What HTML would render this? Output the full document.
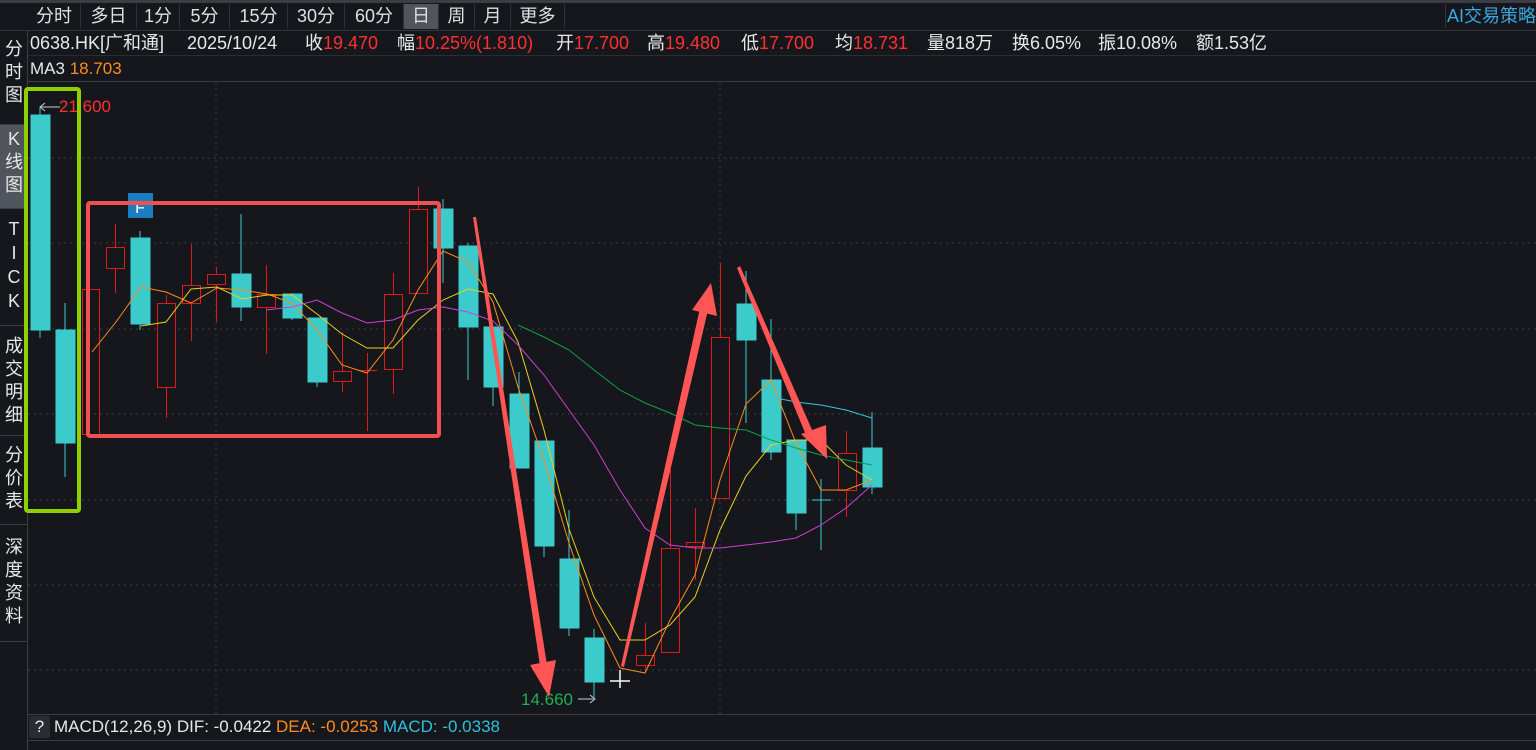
<!DOCTYPE html><html><head><meta charset="utf-8"><style>
body{margin:0;width:1536px;height:750px;background:#15171c;overflow:hidden;position:relative;font-family:"Liberation Sans","Noto Sans CJK SC",sans-serif;color:#e8e8e8}
.a{position:absolute;white-space:nowrap;font-size:18px;line-height:20px}
.r{color:#ff3030}.o{color:#ff8c1a}.c{color:#2fc0d8}
.tab{position:absolute;top:4px;height:25px;line-height:25px;font-size:18px;text-align:center;color:#e0e0e0;border-right:1px solid #2e3138}
.side{position:absolute;left:0;width:28px;text-align:center;font-size:18px;line-height:23px;color:#e8e8e8;border-bottom:1px solid #3a3d44}
</style></head><body>
<div style="position:absolute;left:0;top:0;width:1536px;height:3px;background:#3a3d44"></div>
<div style="position:absolute;left:0;top:30px;width:1536px;height:1px;background:#33363d"></div>
<div style="position:absolute;left:28px;top:81px;width:1508px;height:1px;background:#3a3d44"></div>
<div style="position:absolute;left:28px;top:55px;width:1508px;height:1px;background:#2a2d33"></div>
<div style="position:absolute;left:28px;top:714px;width:1508px;height:1px;background:#3a3d44"></div>
<div style="position:absolute;left:28px;top:740px;width:1508px;height:1px;background:#3a3d44"></div>
<div style="position:absolute;left:27px;top:31px;width:1px;height:719px;background:#3a3d44"></div>
<div class="tab" style="left:28px;width:52px">分时</div>
<div class="tab" style="left:81px;width:55px">多日</div>
<div class="tab" style="left:137px;width:42px">1分</div>
<div class="tab" style="left:180px;width:49px">5分</div>
<div class="tab" style="left:230px;width:57px">15分</div>
<div class="tab" style="left:288px;width:56px">30分</div>
<div class="tab" style="left:345px;width:58px">60分</div>
<div class="tab" style="left:404px;width:34px;background:#50545c">日</div>
<div class="tab" style="left:439px;width:35px">周</div>
<div class="tab" style="left:475px;width:35px">月</div>
<div class="tab" style="left:511px;width:53px">更多</div>
<div class="a" style="left:1447px;top:6px;color:#3aa8e0">AI交易策略</div>
<div style="position:absolute;left:1445px;top:4px;width:1px;height:24px;background:#33363d"></div>
<div class="side" style="top:36px;padding-top:2px;height:86px">分<br>时<br>图</div>
<div class="side" style="top:125px;height:80px;background:#50545c;padding-top:3px">K<br>线<br>图</div>
<div class="side" style="top:209px;height:108px;padding-top:8px;line-height:24px">T<br>I<br>C<br>K</div>
<div class="side" style="top:327px;height:100px;padding-top:8px">成<br>交<br>明<br>细</div>
<div class="side" style="top:436px;height:80px;padding-top:8px">分<br>价<br>表</div>
<div class="side" style="top:526px;height:105px;padding-top:10px">深<br>度<br>资<br>料</div>
<div class="a" style="left:30px;top:33px">0638.HK[广和通]</div>
<div class="a" style="left:187px;top:33px">2025/10/24</div>
<div class="a" style="left:305px;top:33px">收<span class="r">19.470</span></div>
<div class="a" style="left:397px;top:33px">幅<span class="r">10.25%(1.810)</span></div>
<div class="a" style="left:556px;top:33px">开<span class="r">17.700</span></div>
<div class="a" style="left:647px;top:33px">高<span class="r">19.480</span></div>
<div class="a" style="left:741px;top:33px">低<span class="r">17.700</span></div>
<div class="a" style="left:835px;top:33px">均<span class="r">18.731</span></div>
<div class="a" style="left:927px;top:33px">量818万</div>
<div class="a" style="left:1012px;top:33px">换6.05%</div>
<div class="a" style="left:1098px;top:33px">振10.08%</div>
<div class="a" style="left:1196px;top:33px">额1.53亿</div>
<div class="a" style="left:30px;top:59px;font-size:17px">MA3 <span class="o">18.703</span></div>
<div style="position:absolute;left:29px;top:716px;width:21px;height:22px;background:#2a2c32;border-radius:2px;text-align:center;line-height:22px;font-size:17px">?</div>
<div class="a" style="left:54px;top:717px;font-size:17px">MACD(12,26,9) DIF: -0.0422 <span class="o">DEA: -0.0253</span> <span class="c">MACD: -0.0338</span></div>
<div class="a" style="left:59px;top:97px;font-size:17px;color:#ff3030">21.600</div>
<div class="a" style="left:521px;top:690px;font-size:17px;color:#20b050">14.660</div>
<svg style="position:absolute;left:0;top:0" width="1536" height="750">
<g stroke="#3a3d44" stroke-dasharray="2,4" stroke-width="1">
<line x1="28" y1="158" x2="1536" y2="158"/><line x1="28" y1="243" x2="1536" y2="243"/><line x1="28" y1="329" x2="1536" y2="329"/><line x1="28" y1="414" x2="1536" y2="414"/><line x1="28" y1="500" x2="1536" y2="500"/><line x1="28" y1="585" x2="1536" y2="585"/><line x1="28" y1="670" x2="1536" y2="670"/>
<line x1="216" y1="82" x2="216" y2="714"/><line x1="720" y1="82" x2="720" y2="714"/>
</g>
<g stroke="#cccccc" fill="none" stroke-width="1">
<line x1="40" y1="107" x2="60" y2="107"/><polyline points="45,103 40,107 45,111"/>
<line x1="578" y1="699" x2="595" y2="699"/><polyline points="590,695 595,699 590,703"/>
</g>
<g stroke="#3ccbcb" fill="#3ccbcb">
<line x1="40" y1="107" x2="40" y2="338"/><rect x="31" y="115" width="19" height="215"/>
<line x1="65" y1="303" x2="65" y2="477"/><rect x="56" y="330" width="19" height="113"/>
<line x1="140" y1="231" x2="140" y2="330"/><rect x="131" y="238" width="19" height="86"/>
<line x1="241" y1="214" x2="241" y2="321"/><rect x="232" y="274" width="19" height="33"/>
<line x1="292" y1="293" x2="292" y2="320"/><rect x="283" y="294" width="19" height="24"/>
<line x1="317" y1="318" x2="317" y2="387"/><rect x="308" y="318" width="19" height="64"/>
<line x1="443" y1="199" x2="443" y2="283"/><rect x="434" y="209" width="19" height="39"/>
<line x1="468" y1="243" x2="468" y2="380"/><rect x="459" y="246" width="19" height="81"/>
<line x1="493" y1="327" x2="493" y2="406"/><rect x="484" y="327" width="19" height="60"/>
<line x1="519" y1="372" x2="519" y2="468"/><rect x="510" y="394" width="19" height="74"/>
<line x1="544" y1="441" x2="544" y2="557"/><rect x="535" y="441" width="19" height="105"/>
<line x1="569" y1="510" x2="569" y2="636"/><rect x="560" y="559" width="19" height="69"/>
<line x1="594" y1="629" x2="594" y2="700"/><rect x="585" y="638" width="19" height="44"/>
<line x1="746" y1="271" x2="746" y2="423"/><rect x="737" y="304" width="19" height="36"/>
<line x1="771" y1="319" x2="771" y2="460"/><rect x="762" y="380" width="19" height="72"/>
<line x1="796" y1="440" x2="796" y2="530"/><rect x="787" y="440" width="19" height="73"/>
<line x1="821" y1="479" x2="821" y2="550"/><line x1="812" y1="500" x2="831" y2="500"/>
<line x1="872" y1="412" x2="872" y2="494"/><rect x="863" y="448" width="19" height="39"/>
</g>
<g stroke="#e01818" fill="none">
<line x1="99.5" y1="289" x2="99.5" y2="433"/><rect x="82.5" y="289.5" width="17" height="145"/>
<line x1="115.5" y1="224" x2="115.5" y2="293"/><rect x="106.5" y="247.5" width="18" height="21" fill="#15171c"/>
<line x1="166.5" y1="295" x2="166.5" y2="418"/><rect x="157.5" y="303.5" width="18" height="84" fill="#15171c"/>
<line x1="191.5" y1="244" x2="191.5" y2="341"/><rect x="182.5" y="285.5" width="18" height="18" fill="#15171c"/>
<line x1="216.5" y1="267" x2="216.5" y2="322"/><rect x="207.5" y="274.5" width="18" height="10" fill="#15171c"/>
<line x1="266.5" y1="265" x2="266.5" y2="354"/><rect x="257.5" y="294.5" width="18" height="13" fill="#15171c"/>
<line x1="342.5" y1="332" x2="342.5" y2="392"/><rect x="333.5" y="371.5" width="18" height="10" fill="#15171c"/>
<line x1="367.5" y1="353" x2="367.5" y2="431"/><line x1="358" y1="370.5" x2="377" y2="370.5"/>
<line x1="393.5" y1="273" x2="393.5" y2="394"/><rect x="384.5" y="294.5" width="18" height="75" fill="#15171c"/>
<line x1="418.5" y1="187" x2="418.5" y2="209"/><rect x="409.5" y="209.5" width="18" height="84" fill="#15171c"/>
<line x1="645.5" y1="623" x2="645.5" y2="672"/><rect x="636.5" y="655.5" width="18" height="10" fill="#15171c"/>
<line x1="670.5" y1="470" x2="670.5" y2="548"/><rect x="661.5" y="548.5" width="18" height="104" fill="#15171c"/>
<line x1="695.5" y1="508" x2="695.5" y2="580"/><rect x="686.5" y="542.5" width="18" height="4" fill="#15171c"/>
<line x1="720.5" y1="263" x2="720.5" y2="337"/><rect x="711.5" y="337.5" width="18" height="161" fill="#15171c"/>
<line x1="846.5" y1="431" x2="846.5" y2="517"/><rect x="838.5" y="453.5" width="18" height="37" fill="#15171c"/>
</g>
<g fill="none" stroke-width="1">
<polyline stroke="#ff8c1a" points="92,352 116,322 141,287 166,292 191,303 217,288 242,290 267,294 292,303 317,330 342,365 367,373 393,340 418,290 443,251 468,262 493,302 518,387 544,460 569,543 594,615 620,668 645,673 670,620 695,575 720,480 746,404 771,380 796,443 821,490 846,490 872,480"/>
<polyline stroke="#e8d020" points="141,326 166,322 191,289 217,287 242,299 267,295 292,295 317,314 342,334 367,348 393,348 418,320 443,300 468,289 493,294 518,342 544,430 569,529 594,597 620,640 645,640 670,625 695,597 720,530 746,476 771,445 796,440 821,440 846,465 872,480"/>
<polyline stroke="#d040d0" points="266,310 292,307 317,300 342,313 367,323 393,320 418,310 443,307 468,312 493,321 518,345 544,375 569,410 594,445 620,490 645,528 670,545 695,548 720,548 746,545 771,542 796,538 821,525 846,508 872,485"/>
<polyline stroke="#10a040" points="518,325 544,337 569,350 594,370 620,390 645,403 670,413 695,425 720,428 746,430 771,440 796,448 821,455 846,460 872,465"/>
<polyline stroke="#30c8e0" points="771,397 796,402 821,405 846,410 872,418"/>
</g>
<g stroke="#ffffff" stroke-width="1.5"><line x1="620" y1="670" x2="620" y2="688"/><line x1="610" y1="681" x2="630" y2="681"/></g>
<rect x="128" y="193" width="25" height="25" fill="#1a7ec0"/>
<text x="140" y="213" fill="#fff" font-size="16" text-anchor="middle" font-family="Liberation Sans">F</text>
<rect x="26" y="89" width="53" height="422" fill="none" stroke="#8ed000" stroke-width="4" rx="2"/>
<rect x="88" y="203" width="351" height="233" fill="none" stroke="#f05050" stroke-width="4" rx="2"/>
<g fill="#ff5555" stroke="none">
<polygon points="473,217 476,217 547,665 540,666"/><polygon points="530,665 556,660 549,697"/>
<polygon points="621,666 624,667 708,310 700,308"/><polygon points="692,310 717,316 711,283"/>
<polygon points="737,268 740,266 813,432 806,435"/><polygon points="801,434 826,425 827,459"/>
</g>
</svg>
</body></html>
